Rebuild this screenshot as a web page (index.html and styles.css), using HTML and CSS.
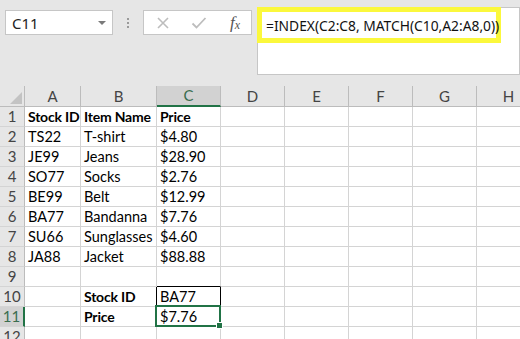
FILE: index.html
```html
<!DOCTYPE html>
<html lang="en">
	<head>
		<meta charset="UTF-8" />
		<title>INDEX MATCH</title>
		<link rel="stylesheet" href="styles.css">
	</head>
	<body>
		<div class="formula-bar">
			<div class="name-box">
				<span class="name-text">C11</span>
				<span class="name-arrow"></span>
			</div>

			<div class="grip">
				<span></span><span></span><span></span>
			</div>

			<div class="fx-buttons">
				<svg class="fx-icon" width="14" height="14" viewBox="0 0 14 14">
					<path d="M2 2 L12 12 M12 2 L2 12" stroke="#bdbdbd" stroke-width="1.6" fill="none" />
				</svg>
				<svg class="fx-icon" width="16" height="14" viewBox="0 0 16 14">
					<path d="M1.5 7.5 L5.5 11.5 L14.5 2" stroke="#bdbdbd" stroke-width="1.8" fill="none" />
				</svg>
				<span class="fx-label">f<sub>x</sub></span>
			</div>

			<div class="formula-box">
				<div class="formula-highlight">=INDEX(C2:C8, MATCH(C10,A2:A8,0))</div>
			</div>
		</div>

		<div class="sheet-wrap">
			<table class="sheet">
				<colgroup>
					<col class="col-head" />
					<col class="col-a" />
					<col class="col-b" />
					<col class="col-std" />
					<col class="col-std" />
					<col class="col-std" />
					<col class="col-std" />
					<col class="col-std" />
					<col class="col-std" />
				</colgroup>
				<thead>
					<tr>
						<th class="corner">
							<svg width="12" height="12" viewBox="0 0 12 12">
								<polygon points="0,12 12,12 12,0" fill="#c3c3c3" />
							</svg>
						</th>
						<th>A</th>
						<th>B</th>
						<th class="active-col">C</th>
						<th>D</th>
						<th>E</th>
						<th>F</th>
						<th>G</th>
						<th>H</th>
					</tr>
				</thead>
				<tbody>
					<tr><th>1</th><td class="bold">Stock ID</td><td class="bold">Item Name</td><td class="bold">Price</td><td></td><td></td><td></td><td></td><td></td></tr>
					<tr><th>2</th><td>TS22</td><td>T-shirt</td><td>$4.80</td><td></td><td></td><td></td><td></td><td></td></tr>
					<tr><th>3</th><td>JE99</td><td>Jeans</td><td>$28.90</td><td></td><td></td><td></td><td></td><td></td></tr>
					<tr><th>4</th><td>SO77</td><td>Socks</td><td>$2.76</td><td></td><td></td><td></td><td></td><td></td></tr>
					<tr><th>5</th><td>BE99</td><td>Belt</td><td>$12.99</td><td></td><td></td><td></td><td></td><td></td></tr>
					<tr><th>6</th><td>BA77</td><td>Bandanna</td><td>$7.76</td><td></td><td></td><td></td><td></td><td></td></tr>
					<tr><th>7</th><td>SU66</td><td>Sunglasses</td><td>$4.60</td><td></td><td></td><td></td><td></td><td></td></tr>
					<tr><th>8</th><td>JA88</td><td>Jacket</td><td>$88.88</td><td></td><td></td><td></td><td></td><td></td></tr>
					<tr><th>9</th><td></td><td></td><td class="edge-bottom"></td><td></td><td></td><td></td><td></td><td></td></tr>
					<tr><th>10</th><td></td><td class="bold edge-right">Stock ID</td><td class="edge-right">BA77</td><td></td><td></td><td></td><td></td><td></td></tr>
					<tr><th class="active-row">11</th><td></td><td class="bold">Price</td><td class="selected">$7.76</td><td></td><td></td><td></td><td></td><td></td></tr>
					<tr><th>12</th><td></td><td></td><td></td><td></td><td></td><td></td><td></td><td></td></tr>
				</tbody>
			</table>
		</div>
	</body>
</html>
```

FILE: styles.css
```css
:root {
	--bar-bg: #e6e6e6;
	--box-border: #c6c6c6;
	--grid-line: #d4d4d4;
	--head-line: #bcbcbc;
	--head-text: #444444;
	--head-active: #d2d2d2;
	--excel-green: #217346;
	--highlight: #fbf83c;
}

* {
	box-sizing: border-box;
	margin: 0;
	padding: 0;
}

body {
	width: 520px;
	height: 339px;
	overflow: hidden;
	background: #ffffff;
	font-family: Lato, 'Liberation Sans', sans-serif;
}

/* Formula bar */
.formula-bar {
	height: 86px;
	background: var(--bar-bg);
	display: flex;
	align-items: flex-start;
	padding-left: 5px;
}

.name-box {
	margin-top: 10px;
	width: 108px;
	height: 25px;
	background: #ffffff;
	border: 1px solid var(--box-border);
	display: flex;
	align-items: center;
	justify-content: space-between;
	padding: 0 6px 0 6px;
	font-family: 'Noto Sans', sans-serif;
	font-size: 15px;
	color: #222222;
}

.name-arrow {
	width: 0;
	height: 0;
	border-left: 4px solid transparent;
	border-right: 4px solid transparent;
	border-top: 4px solid #7a7a7a;
}

.grip {
	margin: 18px 0 0 14px;
	width: 3px;
	display: flex;
	flex-direction: column;
	gap: 2px;
}

.grip span {
	width: 2px;
	height: 2px;
	background: #9a9a9a;
}

.fx-buttons {
	margin: 10px 0 0 13px;
	width: 109px;
	height: 25px;
	background: #ffffff;
	border: 1px solid var(--box-border);
	display: flex;
	align-items: center;
	padding-left: 12px;
	gap: 21px;
}

.fx-label {
	font-family: 'Liberation Serif', serif;
	font-style: italic;
	font-size: 17px;
	color: #555555;
	margin-left: 2px;
}

.fx-label sub {
	font-size: 12px;
	vertical-align: -1px;
}

.formula-box {
	margin: 7px 0 0 5px;
	flex: 1;
	height: 68px;
	background: #ffffff;
	border: 1px solid var(--box-border);
}

.formula-highlight {
	margin: -1px 0 0 -1px;
	width: 244px;
	height: 36px;
	border: 5px solid var(--highlight);
	padding: 4px 0 0 4px;
	font-family: 'Noto Sans', sans-serif;
	font-size: 13.8px;
	color: #111111;
	white-space: nowrap;
}

/* Sheet grid */
.sheet-wrap {
	width: 520px;
	height: 253px;
	overflow: hidden;
}

.sheet {
	border-collapse: separate;
	border-spacing: 0;
	table-layout: fixed;
	width: 541px;
	font-size: 14.5px;
	color: #000000;
}

.col-head { width: 25px; }
.col-a { width: 56px; }
.col-b { width: 76px; }
.col-std { width: 64px; }

.sheet th,
.sheet td {
	height: 20px;
	padding: 0;
	white-space: nowrap;
	overflow: hidden;
	line-height: 19px;
}

.sheet thead th {
	background: var(--bar-bg);
	color: var(--head-text);
	font-weight: 400;
	font-size: 15px;
	border-right: 1px solid var(--head-line);
	border-bottom: 1px solid var(--head-line);
}

.sheet thead .corner {
	text-align: right;
	vertical-align: bottom;
	padding: 0 2px 2px 0;
	line-height: 0;
}

.sheet thead .active-col {
	background: var(--head-active);
	border-bottom: 2px solid var(--excel-green);
	color: #3b6d4f;
}

.sheet tbody th {
	background: var(--bar-bg);
	color: var(--head-text);
	font-weight: 400;
	font-size: 15px;
	text-align: center;
	border-right: 1px solid var(--head-line);
	border-bottom: 1px solid var(--grid-line);
}

.sheet tbody .active-row {
	background: var(--head-active);
	border-right: 2px solid var(--excel-green);
	color: #3b6d4f;
}

.sheet td {
	padding-left: 3px;
	border-right: 1px solid var(--grid-line);
	border-bottom: 1px solid var(--grid-line);
}

.sheet td.bold {
	font-weight: 700;
	font-size: 14px;
	letter-spacing: -0.2px;
}

.sheet td.edge-bottom {
	border-bottom-color: #000000;
}

.sheet td.edge-right {
	border-right-color: #000000;
}

.sheet td.selected {
	position: relative;
	overflow: visible;
}

.sheet td.selected::before {
	content: '';
	position: absolute;
	top: -2px;
	left: -2px;
	right: -1px;
	bottom: -1px;
	border: 2px solid var(--excel-green);
}

.sheet td.selected::after {
	content: '';
	position: absolute;
	right: -3px;
	bottom: -3px;
	width: 5px;
	height: 5px;
	background: var(--excel-green);
	border: 1px solid #ffffff;
}
```
